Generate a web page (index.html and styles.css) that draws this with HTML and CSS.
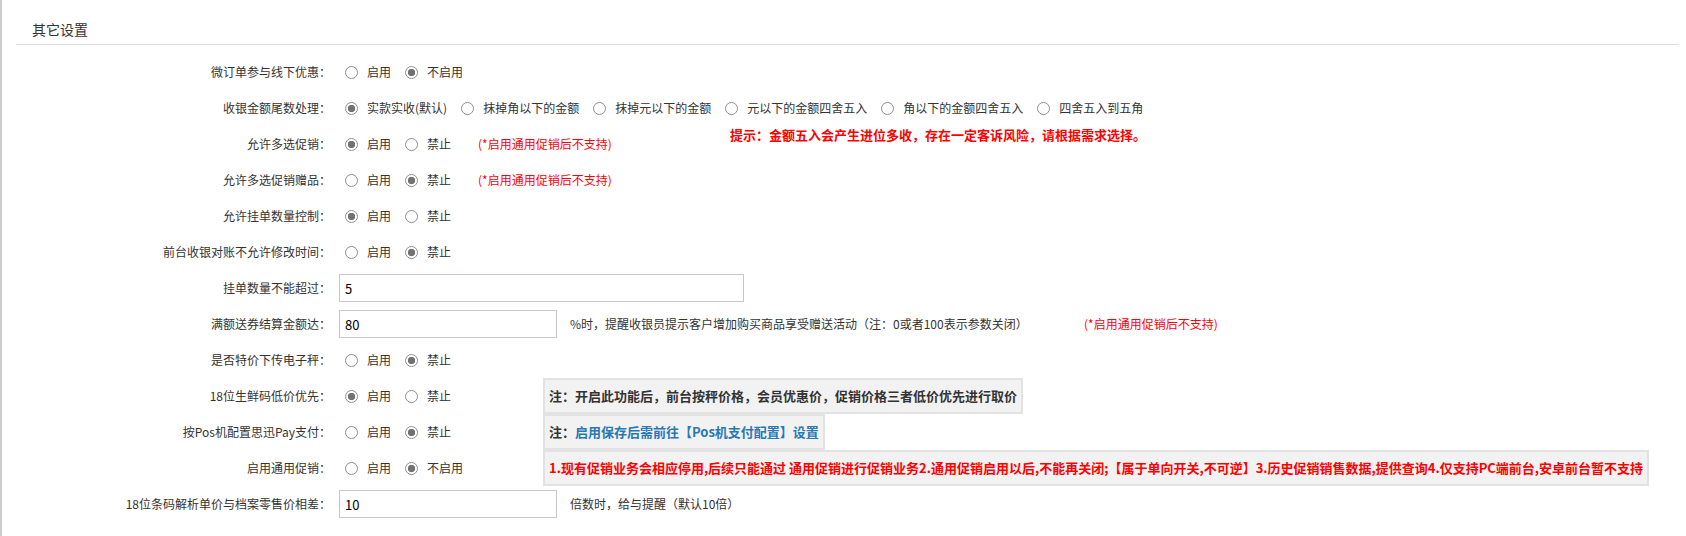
FILE: index.html
```html
<!DOCTYPE html>
<html lang="zh-CN">
<head>
    <meta charset="UTF-8">
    <title>其它设置</title>
    <link rel="stylesheet" href="styles.css">
</head>
<body>
    <div class="panel">
        <div class="panel-title">其它设置</div>
        <div class="form">
            <div class="row">
                <label class="row-label">微订单参与线下优惠：</label>
                <div class="row-value">
                    <label class="opt"><input type="radio" name="wxd">启用</label>
                    <label class="opt"><input type="radio" name="wxd" checked>不启用</label>
                </div>
            </div>
            <div class="row">
                <label class="row-label">收银金额尾数处理：</label>
                <div class="row-value">
                    <label class="opt"><input type="radio" name="tail" checked>实款实收(默认)</label>
                    <label class="opt"><input type="radio" name="tail">抹掉角以下的金额</label>
                    <label class="opt"><input type="radio" name="tail">抹掉元以下的金额</label>
                    <label class="opt"><input type="radio" name="tail">元以下的金额四舍五入</label>
                    <label class="opt"><input type="radio" name="tail">角以下的金额四舍五入</label>
                    <label class="opt"><input type="radio" name="tail">四舍五入到五角</label>
                </div>
            </div>
            <div class="row">
                <label class="row-label">允许多选促销：</label>
                <div class="row-value">
                    <label class="opt"><input type="radio" name="multi" checked>启用</label>
                    <label class="opt"><input type="radio" name="multi">禁止</label>
                    <span class="note">(*启用通用促销后不支持)</span>
                    <span class="hint">提示：金额五入会产生进位多收，存在一定客诉风险，请根据需求选择。</span>
                </div>
            </div>
            <div class="row">
                <label class="row-label">允许多选促销赠品：</label>
                <div class="row-value">
                    <label class="opt"><input type="radio" name="gift">启用</label>
                    <label class="opt"><input type="radio" name="gift" checked>禁止</label>
                    <span class="note">(*启用通用促销后不支持)</span>
                </div>
            </div>
            <div class="row">
                <label class="row-label">允许挂单数量控制：</label>
                <div class="row-value">
                    <label class="opt"><input type="radio" name="hang" checked>启用</label>
                    <label class="opt"><input type="radio" name="hang">禁止</label>
                </div>
            </div>
            <div class="row">
                <label class="row-label">前台收银对账不允许修改时间：</label>
                <div class="row-value">
                    <label class="opt"><input type="radio" name="chk">启用</label>
                    <label class="opt"><input type="radio" name="chk" checked>禁止</label>
                </div>
            </div>
            <div class="row">
                <label class="row-label">挂单数量不能超过：</label>
                <div class="row-value">
                    <input type="text" class="txt txt-long" value="5">
                </div>
            </div>
            <div class="row">
                <label class="row-label">满额送券结算金额达：</label>
                <div class="row-value">
                    <input type="text" class="txt" value="80">
                    <span class="desc desc-wide">%时，提醒收银员提示客户增加购买商品享受赠送活动（注：0或者100表示参数关闭）</span>
                    <span class="note">(*启用通用促销后不支持)</span>
                </div>
            </div>
            <div class="row">
                <label class="row-label">是否特价下传电子秤：</label>
                <div class="row-value">
                    <label class="opt"><input type="radio" name="scale">启用</label>
                    <label class="opt"><input type="radio" name="scale" checked>禁止</label>
                </div>
            </div>
            <div class="row">
                <label class="row-label">18位生鲜码低价优先：</label>
                <div class="row-value">
                    <div class="opts">
                        <label class="opt"><input type="radio" name="fresh" checked>启用</label>
                        <label class="opt"><input type="radio" name="fresh">禁止</label>
                    </div>
                    <div class="tip-box">注：开启此功能后，前台按秤价格，会员优惠价，促销价格三者低价优先进行取价</div>
                </div>
            </div>
            <div class="row">
                <label class="row-label">按Pos机配置思迅Pay支付：</label>
                <div class="row-value">
                    <div class="opts">
                        <label class="opt"><input type="radio" name="pay">启用</label>
                        <label class="opt"><input type="radio" name="pay" checked>禁止</label>
                    </div>
                    <div class="tip-box">注：<span class="blue">启用保存后需前往【Pos机支付配置】设置</span></div>
                </div>
            </div>
            <div class="row">
                <label class="row-label">启用通用促销：</label>
                <div class="row-value">
                    <div class="opts">
                        <label class="opt"><input type="radio" name="promo">启用</label>
                        <label class="opt"><input type="radio" name="promo" checked>不启用</label>
                    </div>
                    <div class="tip-box red">1.现有促销业务会相应停用,后续只能通过 通用促销进行促销业务2.通用促销启用以后,不能再关闭;【属于单向开关,不可逆】3.历史促销销售数据,提供查询4.仅支持PC端前台,安卓前台暂不支持</div>
                </div>
            </div>
            <div class="row">
                <label class="row-label">18位条码解析单价与档案零售价相差：</label>
                <div class="row-value">
                    <input type="text" class="txt" value="10">
                    <span class="desc">倍数时，给与提醒（默认10倍）</span>
                </div>
            </div>
        </div>
    </div>
</body>
</html>
```

FILE: styles.css
```css
* { margin: 0; padding: 0; box-sizing: border-box; }
body {
    font-family: "Microsoft YaHei", "Noto Sans CJK SC", sans-serif;
    font-size: 12px;
    color: #333;
    background: #fff;
}
.panel {
    border-left: 2px solid #ccc;
    min-height: 100vh;
    padding-right: 7px;
}
.panel-title {
    margin-left: 14px;
    height: 45px;
    padding: 19px 0 0 16px;
    font-size: 14px;
    line-height: 20px;
    border-bottom: 1px solid #ddd;
}
.form { padding-top: 9px; }
.row {
    display: flex;
    align-items: center;
    height: 36px;
}
.row-label {
    width: 329px;
    flex-shrink: 0;
    text-align: right;
    line-height: 18px;
}
.row-value {
    display: flex;
    align-items: center;
    height: 100%;
    padding-left: 8px;
    line-height: 18px;
}
.opts { display: flex; align-items: center; width: 204px; height: 100%; }
.opt {
    display: flex;
    align-items: center;
    gap: 9px;
    margin: 0 8px 0 6px;
    white-space: nowrap;
}
.opt input {
    appearance: none;
    width: 13px;
    height: 13px;
    margin: 0;
    border: 1px solid #8f8f8f;
    border-radius: 50%;
    background: #fff;
}
.opt input:checked {
    background: radial-gradient(circle, #727272 0 3.4px, #fff 4px);
}
.note { color: #f00; margin-left: 19px; width: 252px; white-space: nowrap; }
.hint {
    align-self: flex-start;
    margin-top: 0;
    color: #f00;
    font-size: 13px;
    font-weight: bold;
    white-space: nowrap;
}
.txt {
    width: 218px;
    height: 28px;
    border: 1px solid #c8c8c8;
    padding: 0 5px;
    font-family: inherit;
    font-size: 13px;
    color: #000;
    outline: none;
}
.txt-long { width: 405px; }
.desc { margin-left: 13px; white-space: nowrap; }
.desc-wide { width: 514px; flex-shrink: 0; }
.desc-wide + .note { margin-left: 0; }
.tip-box {
    height: 36px;
    display: flex;
    align-items: center;
    padding: 0 4px;
    border: 2px solid #e2e2e2;
    background: #f2f2f2;
    font-size: 13px;
    font-weight: bold;
    white-space: nowrap;
}
.tip-box .blue { color: #2878b8; }
.tip-box.red { color: #f00; }
```
